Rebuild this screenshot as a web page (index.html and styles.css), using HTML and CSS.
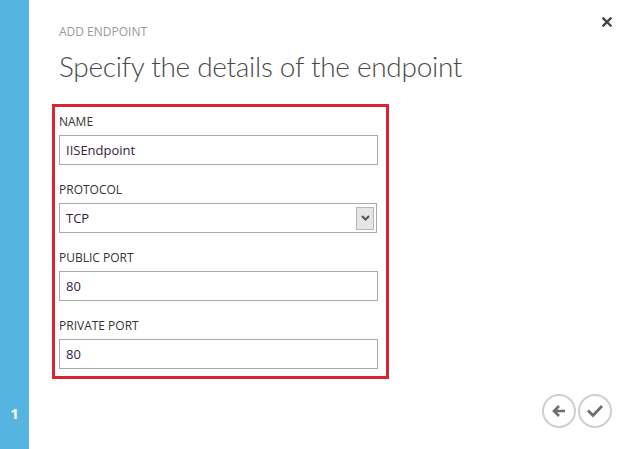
FILE: index.html
```html
<!DOCTYPE html>
<html lang="en">
<head>
    <meta charset="UTF-8">
    <meta name="viewport" content="width=device-width, initial-scale=1.0">
    <title>Add Endpoint</title>
    <link rel="stylesheet" href="styles.css">
</head>
<body>
    <div class="sidebar">
        <span class="step">1</span>
    </div>

    <div class="main">
        <div class="header">
            <div>
                <div class="subtitle">ADD ENDPOINT</div>
                <h1>Specify the details of the endpoint</h1>
            </div>
            <button class="close" title="Close">
                <svg width="10" height="10" viewBox="0 0 10 10">
                    <path d="M1.5 1.5 L8.5 8.5 M8.5 1.5 L1.5 8.5" stroke="#444" stroke-width="2.4" stroke-linecap="square"/>
                </svg>
            </button>
        </div>

        <div class="form-box">
            <div class="field">
                <label>NAME</label>
                <div class="input">IISEndpoint</div>
            </div>
            <div class="field">
                <label>PROTOCOL</label>
                <div class="input select">
                    <span>TCP</span>
                    <span class="arrow">
                        <svg width="9" height="6" viewBox="0 0 9 6">
                            <path d="M1 1 L4.5 4.5 L8 1" fill="none" stroke="#555" stroke-width="2"/>
                        </svg>
                    </span>
                </div>
            </div>
            <div class="field">
                <label>PUBLIC PORT</label>
                <div class="input">80</div>
            </div>
            <div class="field">
                <label>PRIVATE PORT</label>
                <div class="input">80</div>
            </div>
        </div>

        <div class="footer">
            <button class="circle" title="Back">
                <svg width="16" height="14" viewBox="0 0 16 14">
                    <path d="M14 7 H3 M8 2 L3 7 L8 12" fill="none" stroke="#6e6e6e" stroke-width="2.6"/>
                </svg>
            </button>
            <button class="circle" title="Complete">
                <svg width="18" height="14" viewBox="0 0 18 14">
                    <path d="M2 6.5 L7 11.5 L16 2" fill="none" stroke="#6e6e6e" stroke-width="2.8"/>
                </svg>
            </button>
        </div>
    </div>
</body>
</html>
```

FILE: styles.css
```css
html, body {
    margin: 0;
    padding: 0;
    height: 100%;
}

body {
    display: flex;
    font-family: "Open Sans", "Noto Sans", sans-serif;
    background-color: #fff;
    color: #333;
}

.sidebar {
    width: 29px;
    background-color: #55b5e0;
    display: flex;
    flex-direction: column;
    justify-content: flex-end;
    align-items: center;
    padding-bottom: 26px;
    box-sizing: border-box;
}

.step {
    color: #fff;
    font-weight: bold;
    font-size: 15px;
    line-height: 20px;
}

.main {
    flex: 1;
    display: flex;
    flex-direction: column;
    padding: 24px 17px 21px 23px;
    box-sizing: border-box;
}

.header {
    display: flex;
    justify-content: space-between;
    align-items: flex-start;
    padding-left: 7px;
}

.subtitle {
    font-size: 12px;
    line-height: 16px;
    color: #999;
}

h1 {
    margin: 8px 0 0 0;
    font-family: Lato, "Open Sans", sans-serif;
    font-size: 28px;
    line-height: 37px;
    font-weight: 300;
    letter-spacing: -0.3px;
    color: #4a4a4a;
}

.close {
    background: none;
    border: none;
    padding: 0;
    margin-top: -9px;
    cursor: pointer;
    width: 10px;
    height: 10px;
}

.form-box {
    margin-top: 19px;
    width: 337px;
    border: 3px solid #dc2430;
    padding: 7px 8px 7px 4px;
    box-sizing: border-box;
    display: flex;
    flex-direction: column;
    gap: 17px;
}

label {
    display: block;
    font-size: 12px;
    line-height: 16px;
    color: #333;
    margin-bottom: 5px;
}

.input {
    height: 30px;
    border: 1px solid #a9a9a9;
    box-sizing: border-box;
    padding: 0 6px;
    display: flex;
    align-items: center;
    font-size: 13px;
    color: #35213f;
}

.select {
    width: 318px;
    justify-content: space-between;
    padding-right: 2px;
}

.arrow {
    width: 18px;
    height: 23px;
    box-sizing: border-box;
    border: 1px solid #b5b5b5;
    background-color: #e6e6e6;
    display: flex;
    align-items: center;
    justify-content: center;
}

.footer {
    margin-top: auto;
    display: flex;
    justify-content: flex-end;
    gap: 2px;
}

.circle {
    width: 34px;
    height: 34px;
    border-radius: 50%;
    border: 2px solid #cfcfcf;
    background: #fff;
    padding: 0;
    display: flex;
    align-items: center;
    justify-content: center;
    cursor: pointer;
}
```
